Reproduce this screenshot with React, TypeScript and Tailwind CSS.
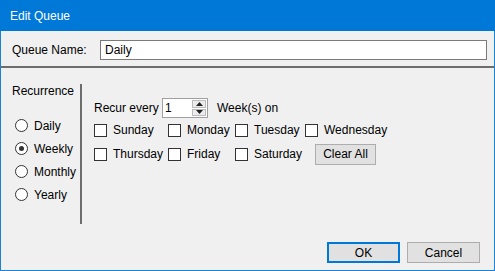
import React from 'react'

const FONT = "font-['Segoe_UI','Liberation_Sans',Arial,sans-serif]"

function Radio({ label, checked }: { label: string; checked?: boolean }) {
  return (
    <div className="flex h-[23px] items-center">
      <div className="flex h-[13px] w-[13px] items-center justify-center rounded-full border border-[#333333] bg-white">
        {checked && <div className="h-[5px] w-[5px] rounded-full bg-[#333333]" />}
      </div>
      <span className="ml-[6px]">{label}</span>
    </div>
  )
}

function Check({ label, width }: { label: string; width: string }) {
  return (
    <div className={`flex items-center ${width}`}>
      <div className="h-[13px] w-[13px] border border-[#333333] bg-white" />
      <span className="ml-[6px]">{label}</span>
    </div>
  )
}

function SpinBox() {
  return (
    <div className="flex h-[20px] w-[46px] border border-[#a0a0a0] bg-white">
      <div className="flex-1 pl-[2px] leading-[18px]">1</div>
      <div className="my-[1px] mr-[1px] flex w-[14px] flex-col gap-[1px]">
        <div className="flex flex-1 items-center justify-center border border-[#bcbcbc] bg-[#ececec]">
          <svg width="7" height="4" viewBox="0 0 7 4">
            <path d="M0 4 L3.5 0 L7 4 Z" fill="#222" />
          </svg>
        </div>
        <div className="flex flex-1 items-center justify-center border border-[#bcbcbc] bg-[#ececec]">
          <svg width="7" height="4" viewBox="0 0 7 4">
            <path d="M0 0 L3.5 4 L7 0 Z" fill="#222" />
          </svg>
        </div>
      </div>
    </div>
  )
}

export default function App() {
  return (
    <div
      className={`flex h-[271px] w-[495px] flex-col border-x border-b border-[#1883d7] bg-[#f0f0f0] text-[12px] text-black ${FONT}`}
    >
      <div className="-mx-px flex h-[31px] items-center bg-[#0078d7] pl-[10px] text-white">
        Edit Queue
      </div>

      <div className="mt-[9px] flex h-[20px] items-center pl-[11px] pr-[7px]">
        <span className="w-[88px]">Queue Name:</span>
        <div className="h-[20px] flex-1 border border-[#7a7a7a] bg-white pl-[4px] leading-[18px]">
          Daily
        </div>
      </div>

      <div className="mt-[6px] h-[2px] bg-[#6d6d6d]" />

      <div className="mt-[16px] flex">
        <div className="w-[79px] pl-[11px]">
          <div className="leading-[14px]">Recurrence</div>
          <div className="mt-[16px] pl-[3px]">
            <Radio label="Daily" />
            <Radio label="Weekly" checked />
            <Radio label="Monthly" />
            <Radio label="Yearly" />
          </div>
        </div>

        <div className="h-[140px] w-[2px] bg-[#6d6d6d]" />

        <div className="pl-[12px]">
          <div className="mt-[14px] flex h-[20px] items-center">
            <span className="w-[68px]">Recur every</span>
            <SpinBox />
            <span className="ml-[9px]">Week(s) on</span>
          </div>
          <div className="flex h-[24px] items-center">
            <Check label="Sunday" width="w-[74px]" />
            <Check label="Monday" width="w-[67px]" />
            <Check label="Tuesday" width="w-[70px]" />
            <Check label="Wednesday" width="" />
          </div>
          <div className="flex h-[24px] items-center">
            <Check label="Thursday" width="w-[74px]" />
            <Check label="Friday" width="w-[67px]" />
            <Check label="Saturday" width="w-[70px]" />
            <button className="ml-[10px] h-[21px] w-[61px] border border-[#adadad] bg-[#e1e1e1]">
              Clear All
            </button>
          </div>
        </div>
      </div>

      <div className="mt-[18px] flex justify-end gap-[7px] pr-[14px]">
        <button className="h-[21px] w-[73px] border-2 border-[#0078d7] bg-[#e1e1e1]">OK</button>
        <button className="h-[21px] w-[73px] border border-[#adadad] bg-[#e1e1e1]">Cancel</button>
      </div>
    </div>
  )
}
